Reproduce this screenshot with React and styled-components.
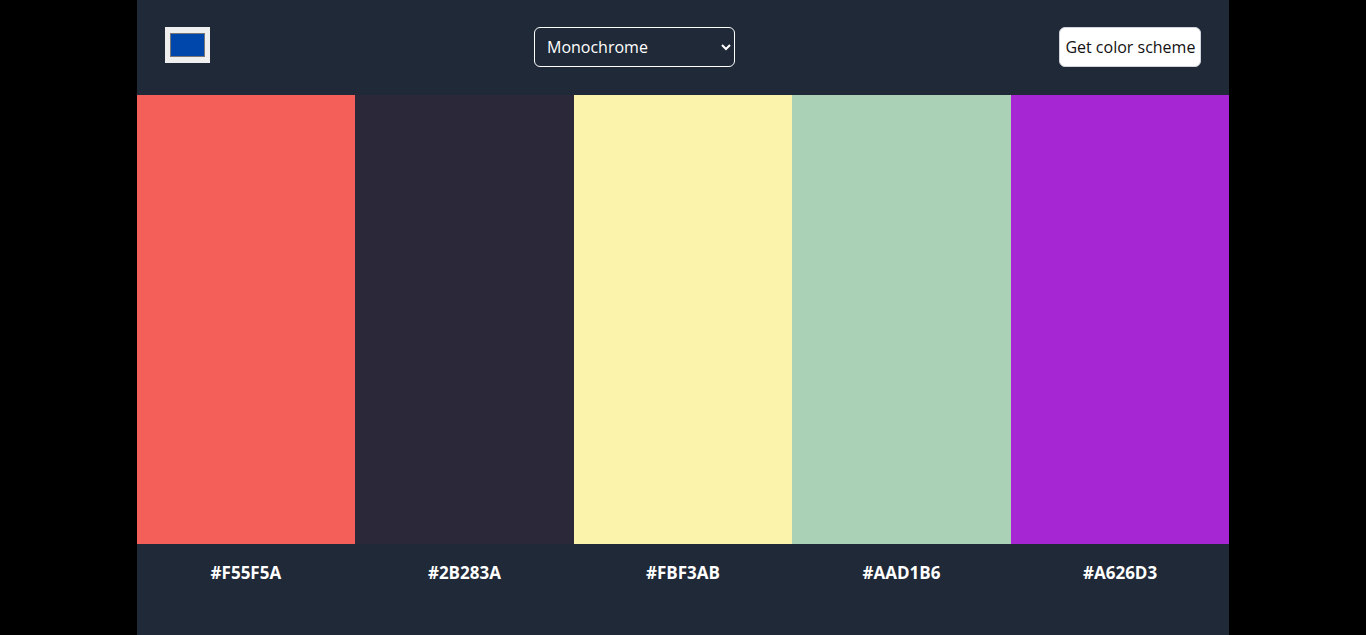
import React, { useState } from 'react';
import styled, { createGlobalStyle } from 'styled-components';

const GlobalStyle = createGlobalStyle`
  html, body {
    margin: 0;
    padding: 0;
    background: #000;
    font-family: "Open Sans", "Liberation Sans", sans-serif;
  }
`;

const Page = styled.main`
  width: 80%;
  margin: 0 auto;
  min-height: 100vh;
  background-color: #1f2937;
  display: flex;
  flex-direction: column;
`;

const Header = styled.header`
  height: 95px;
  box-sizing: border-box;
  padding: 27px 28px 28px;
  display: flex;
  justify-content: space-between;
  align-items: flex-start;
`;

const ColorInput = styled.input`
  width: 45px;
  height: 36px;
  margin: 0;
  padding: 1px 2px;
  border: 1px solid #efefef;
  background-color: #efefef;
  cursor: pointer;
`;

const Select = styled.select`
  width: 201px;
  height: 40px;
  padding: 0 8px 0 8px;
  border: 1px solid #fff;
  border-radius: 6px;
  background-color: transparent;
  color: #fff;
  font-family: inherit;
  font-size: 16px;
  option {
    color: #000;
  }
`;

const Button = styled.button`
  height: 40px;
  padding: 0 5px;
  border: 1px solid #d1d5db;
  border-radius: 6px;
  background-color: #fff;
  color: #111;
  font-family: inherit;
  font-size: 16px;
  cursor: pointer;
`;

const Swatches = styled.section`
  display: grid;
  grid-template-columns: repeat(5, 1fr);
  height: 449px;
`;

const Swatch = styled.div`
  background-color: ${({ $color }) => $color};
`;

const Labels = styled.footer`
  display: grid;
  grid-template-columns: repeat(5, 1fr);
  padding-top: 17px;
  flex: 1;
`;

const Label = styled.p`
  margin: 0;
  text-align: center;
  color: #fff;
  font-weight: 700;
  font-size: 17px;
`;

const colors = ['#F55F5A', '#2B283A', '#FBF3AB', '#AAD1B6', '#A626D3'];

export default function App() {
  const [seed, setSeed] = useState('#0047ab');
  const [mode, setMode] = useState('monochrome');

  return (
    <>
      <GlobalStyle />
      <Page>
        <Header>
          <ColorInput
            type="color"
            value={seed}
            onChange={(e) => setSeed(e.target.value)}
          />
          <Select value={mode} onChange={(e) => setMode(e.target.value)}>
            <option value="monochrome">Monochrome</option>
            <option value="monochrome-dark">Monochrome-dark</option>
            <option value="monochrome-light">Monochrome-light</option>
            <option value="analogic">Analogic</option>
            <option value="complement">Complement</option>
            <option value="analogic-complement">Analogic-complement</option>
            <option value="triad">Triad</option>
            <option value="quad">Quad</option>
          </Select>
          <Button>Get color scheme</Button>
        </Header>
        <Swatches>
          {colors.map((c) => (
            <Swatch key={c} $color={c} />
          ))}
        </Swatches>
        <Labels>
          {colors.map((c) => (
            <Label key={c}>{c}</Label>
          ))}
        </Labels>
      </Page>
    </>
  );
}
